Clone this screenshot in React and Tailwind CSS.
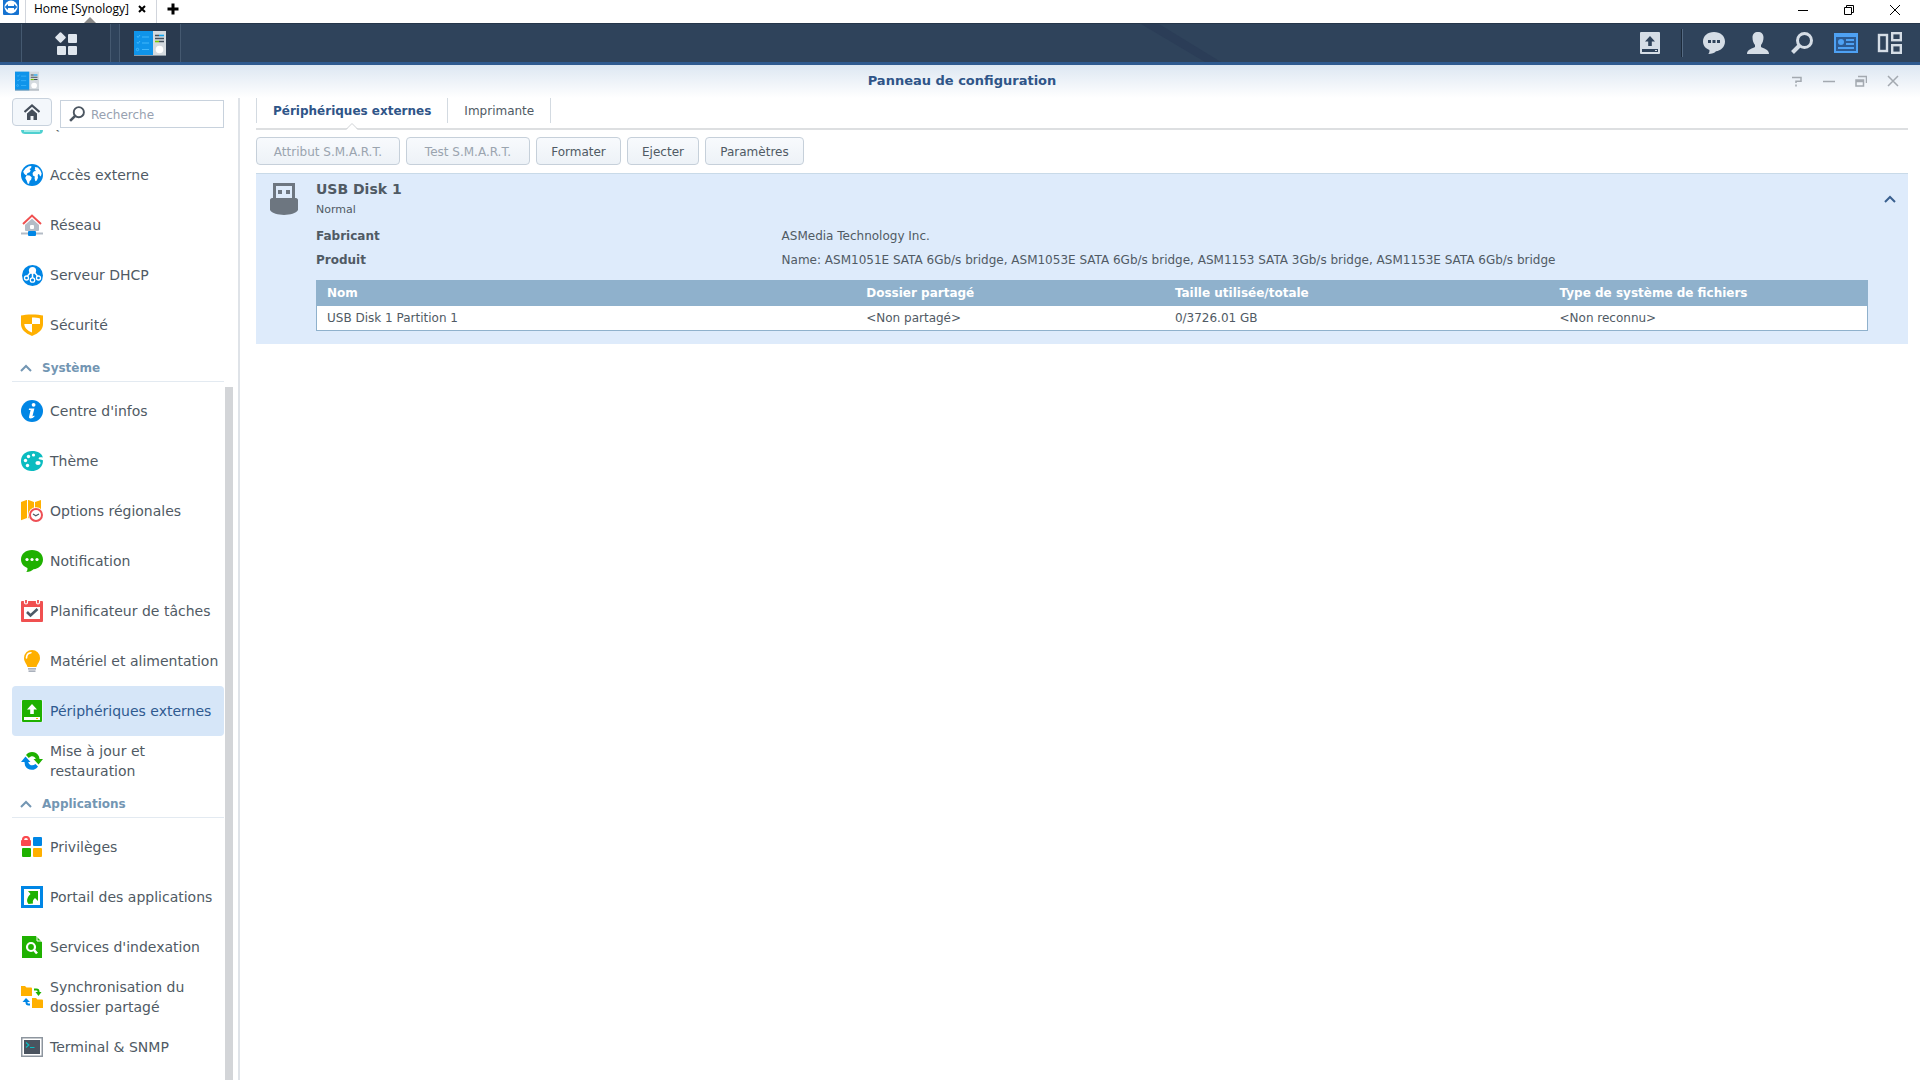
import React from 'react';

/* ---------- Sidebar icons, 22x22 ---------- */

const Svg = ({ children, className = 'w-[22px] h-[22px]', box = '0 0 22 22' }) => (
  <svg className={`shrink-0 ${className}`} viewBox={box} fill="none" aria-hidden="true">
    {children}
  </svg>
);

const QuickConnectIcon = () => (
  <Svg>
    <path d="M0 0h22v16c0 3-2 4-4 4H4c-2 0-4-1-4-4z" fill="#4fd0d0" />
    <rect x="3" y="16" width="16" height="2" fill="#a5ebe8" />
  </Svg>
);

const GlobeIcon = () => (
  <Svg>
    <circle cx="11" cy="11" r="11" fill="#0086e5" />
    <path d="M2.2 7.6 4.4 4.4 7.800 2.300l2.600-.3-.3 2-1.600 1 1.200 1.600-1 1.700-2.400.9-.3 1.500-1.500.2L3 9.600zM5.600 11.200l3 .4 2.100 1.700-.6 2.500-1.400 1.300-.6 2.500-1.200.3-1.300-3.400-1.400-2.600zM13.800 3l3 .4 2.600 3 1.200 3-.5 2.200-1 .8-.7-1.800-1.300-.6-.4 1.800.3 2-1.200 2.600-1.400.8-.8-2.600.2-2.200-1.900-.9-.3-2.500 1.500-1.800 1.900-.3-1.300-1.300.5-1.600z" fill="#fff" />
  </Svg>
);

const NetworkIcon = () => (
  <Svg>
    <path d="M4 9.500 11 4l7 5.500V16a1 1 0 0 1-1 1H5a1 1 0 0 1-1-1z" fill="#b4bcc6" />
    <rect x="9" y="11" width="4" height="4" rx="1" fill="#fff" />
    <path d="M2 10 11 2l9 8" stroke="#fff" strokeWidth="4" />
    <path d="M2 10 11 1.600 20 10" stroke="#f05050" strokeWidth="2" />
    <path d="M0 19.500h22" stroke="#b4bcc6" strokeWidth="2" />
    <rect x="7" y="17" width="8" height="5" rx="1" fill="#0086e5" />
  </Svg>
);

const DhcpIcon = () => (
  <Svg>
    <circle cx="11.500" cy="11.500" r="10.500" fill="#0086e5" />
    <circle cx="11.500" cy="6.500" r="3.600" fill="#fff" />
    <path d="M11.500 9v5M9.500 8.500 6.500 12M13.500 8.500l3 3.500" stroke="#fff" strokeWidth="1.500" />
    <circle cx="5.500" cy="14" r="2" stroke="#fff" strokeWidth="1.300" />
    <circle cx="17.500" cy="14" r="2" stroke="#fff" strokeWidth="1.300" />
    <circle cx="11.500" cy="16" r="2.200" stroke="#fff" strokeWidth="1.300" />
  </Svg>
);

const ShieldIcon = () => (
  <Svg>
    <path d="M0 1.500C4 0 18 0 22 1.500V10c0 5.500-4 9-11 12C4 19 0 15.500 0 10z" fill="#ffb000" />
    <path d="M11 3.500c3 0 6 .3 8 1V10h-8zM11 10v8.500C6.500 16.500 3.500 14 3.300 10z" fill="#fff" />
  </Svg>
);

const InfoIcon = () => (
  <Svg>
    <circle cx="11" cy="11" r="11" fill="#0086e5" />
    <circle cx="12.600" cy="4.800" r="1.900" fill="#fff" />
    <path d="M8 8.600h5.400l-1.900 7.300c-.1.600.4.600 1.700-.3l.4.600c-1.300 1.500-2.500 2.200-4 2.200-1.400 0-1.800-.9-1.500-2l1.500-6.400H7.800z" fill="#fff" />
  </Svg>
);

const PaletteIcon = () => (
  <Svg>
    <path d="M11 1c6 0 10 2.500 10.800 6.500-2.300-.6-4.300-.3-4.200 1.100.1 1.200 2.500 1.200 4.300 1.600.6 6-4.400 10.800-11.400 10.800C4.500 21 0 16.800 0 11S4.500 1 11 1z" fill="#0bbcc0" />
    <ellipse cx="17" cy="13" rx="2.600" ry="2.100" fill="#fff" />
    <circle cx="4.500" cy="10.500" r="1.700" fill="#fff" />
    <circle cx="7.500" cy="6.500" r="1.700" fill="#fff" />
    <circle cx="12.500" cy="5" r="1.600" fill="#fff" />
    <circle cx="6.500" cy="15.500" r="1.700" fill="#fff" />
  </Svg>
);

const RegionIcon = () => (
  <Svg>
    <path d="M0 2 6-.2V18l-6 2.200zM7-.2 13 2v18l-6-2zM14 2l6-2v18l-6 2z" fill="#ffb000" />
    <circle cx="15" cy="15" r="7.800" fill="#fff" />
    <circle cx="15" cy="15" r="6" stroke="#ee4f55" strokeWidth="2" />
    <path d="m12 14 2.800 1.800L18 14" stroke="#4d5a66" strokeWidth="1.200" />
  </Svg>
);

const NotificationIcon = () => (
  <Svg>
    <path d="M11 0c6.500 0 11 4 11 9.500S17.500 19 12.500 19.200c-1.500 1.600-4 2.800-7.300 2.800 1-1 1.500-2.500 1.200-4C2.500 16.500 0 13.500 0 9.500 0 4 4.500 0 11 0z" fill="#1fb100" />
    <circle cx="6" cy="9.500" r="1.600" fill="#fff" />
    <circle cx="11" cy="9.500" r="1.600" fill="#fff" />
    <circle cx="16" cy="9.500" r="1.600" fill="#fff" />
  </Svg>
);

const CalendarIcon = () => (
  <Svg>
    <rect x="0" y="1" width="22" height="21" rx="1" fill="#f05050" />
    <rect x="3" y="7" width="16" height="12" fill="#fff" />
    <path d="M3.500 0v2.500a1 1 0 0 0 3 0V0M15.500 0v2.500a1 1 0 0 0 3 0V0" stroke="#fff" strokeWidth="1.200" fill="#f05050" />
    <path d="m6 12 3.500 3.500L16.500 9" stroke="#4d5a66" strokeWidth="2.600" />
  </Svg>
);

const BulbIcon = () => (
  <Svg>
    <path d="M11 0a8 8 0 0 1 8 8c0 4-3 6-3.500 9h-9C6 14 3 12 3 8a8 8 0 0 1 8-8z" fill="#ffb000" />
    <path d="M5.500 8c0-3 2-5 4.500-5.300" stroke="#fff" strokeWidth="1.600" strokeLinecap="round" />
    <path d="M7 18.800h8M7.500 21.200h7" stroke="#8f98a6" strokeWidth="1.300" />
  </Svg>
);

const ExternalDeviceIcon = () => (
  <Svg>
    <rect x="0.500" y="-.5" width="21" height="23" rx="1" fill="#fff" />
    <rect x="1" y="0" width="20" height="22" rx="1" fill="#1fb100" />
    <path d="m11 4 5 5.500h-3.200V14H9.200V9.500H6z" fill="#fff" />
    <rect x="3" y="17" width="16" height="3" fill="#fff" />
    <rect x="15" y="18" width="2" height="1" fill="#ffb000" />
  </Svg>
);

const UpdateIcon = () => (
  <Svg>
    <path d="M5 5C8 .8 15.500 1 18 6.500L18.500 9H22l-4.500 5.500L12.500 9h2.300c-1.300-3.200-4.600-3.600-7-1z" fill="#1fb100" />
    <path d="M17 16.500C14 21.200 6.500 21 4 15.500L3.500 12H0l4.500-5.500L9.500 12H7.200c1 3.600 4.600 4.400 7.300 2z" fill="#0086e5" />
  </Svg>
);

const PrivilegesIcon = () => (
  <Svg>
    <path d="M2 6V4a3 3 0 0 1 6 0v2" stroke="#fb4a4f" strokeWidth="2.200" />
    <rect x="0" y="4" width="10" height="6" rx="1" fill="#fb4a4f" />
    <rect x="12" y="1" width="9" height="9" rx="1" fill="#0086e5" />
    <rect x="1" y="12" width="9" height="9" rx="1" fill="#1fb100" />
    <rect x="12" y="12" width="9" height="9" rx="1" fill="#ffb000" />
  </Svg>
);

const PortalIcon = () => (
  <Svg>
    <rect x="1.500" y="1.500" width="19" height="19" fill="#fff" stroke="#0086e5" strokeWidth="3" />
    <path d="M7 5h10v10l-3-3c-2 1.500-2.500 3-2 5.500L7.500 18C5 15 6 11.500 9.500 8z" fill="#1fb100" />
  </Svg>
);

const IndexIcon = () => (
  <Svg>
    <path d="M1 0h14l6 6v16H1z" fill="#1fb100" />
    <path d="M16 0v5h5" stroke="#fff" strokeWidth="1" />
    <circle cx="10" cy="11" r="4" stroke="#fff" strokeWidth="2.200" />
    <path d="m13 14 3 3.500" stroke="#fff" strokeWidth="2.600" />
  </Svg>
);

const FolderSyncIcon = () => (
  <Svg>
    <path d="M0 0h4l1.500 1.500H10a1 1 0 0 1 1 1V10H0zM11 12h4l1.500 1.500H21a1 1 0 0 1 1 1V22H11z" fill="#ffb000" />
    <path d="M13 3.500h2.500q2 0 2 2V8" stroke="#1fb100" strokeWidth="2" />
    <path d="M14.500 6h6l-3 4z" fill="#1fb100" />
    <path d="M9 18.500H7.500q-2 0-2-2V14" stroke="#0086e5" strokeWidth="2" />
    <path d="M1.500 16h7.500l-4-4z" fill="#0086e5" />
  </Svg>
);

const TerminalIcon = () => (
  <Svg>
    <rect x="0.750" y="1.750" width="20.500" height="18.500" fill="#fff" stroke="#8d959e" strokeWidth="1.500" />
    <rect x="3" y="4" width="16" height="14" fill="#4a535f" />
    <path d="m5 6.500 2.800 2.500L5 11.500M9 11.500h4.500" stroke="#0bbcc0" strokeWidth="1.200" />
  </Svg>
);

/* ---------- Shell icons ---------- */

const ControlPanelIcon = ({ className }) => (
  <Svg className={className} box="0 0 32 25">
    <rect width="32" height="25" fill="#d4dadf" />
    <rect width="19" height="25" fill="#0f94ea" />
    <path d="m3 5 1 1.500L6 4M8 6h7M3 11l1 1.500L6 10M8 12h7M8 18.500h7" stroke="#4fc0ff" strokeWidth="0.800" />
    <circle cx="3.500" cy="18.500" r="1.200" stroke="#4fc0ff" strokeWidth="0.800" />
    <path d="M21 4.500h4M21 7.500h9M25 10.500h5" stroke="#434f5c" strokeWidth="1.600" />
    <path d="M25 4.500h5" stroke="#12a5ee" strokeWidth="1.600" />
    <path d="M21 10.500h4" stroke="#7ac800" strokeWidth="1.600" />
    <circle cx="25.500" cy="18.500" r="3.800" fill="#fff" />
    <path d="M0 24.500h32" stroke="#8b97a2" strokeWidth="1" />
  </Svg>
);

const Chevron = ({ className }) => (
  <Svg className={className} box="0 0 12 8">
    <path d="m1 7 5-5 5 5" stroke="currentColor" strokeWidth="2" />
  </Svg>
);

const Magnifier = ({ className }) => (
  <Svg className={className}>
    <circle cx="13.500" cy="8.500" r="7" stroke="currentColor" strokeWidth="2.600" />
    <path d="m8.500 13.500-7 7" stroke="currentColor" strokeWidth="3.600" />
  </Svg>
);

const UsbIcon = () => (
  <Svg className="w-7 h-8" box="0 0 28 32">
    <path d="M4.500 1.500h19V17h-19z" fill="#deebfb" stroke="#6d7680" strokeWidth="3" />
    <rect x="8" y="7" width="4" height="4" fill="#6d7680" />
    <rect x="16" y="7" width="4" height="4" fill="#6d7680" />
    <path d="M0 17c0-1 1-2 2-2h24c1 0 2 1 2 2v10c-4 6.500-24 6.500-28 0z" fill="#6d7680" />
  </Svg>
);

const SECTIONS = [
  {
    title: null,
    items: [
      { label: 'QuickConnect', Icon: QuickConnectIcon },
      { label: 'Accès externe', Icon: GlobeIcon },
      { label: 'Réseau', Icon: NetworkIcon },
      { label: 'Serveur DHCP', Icon: DhcpIcon },
      { label: 'Sécurité', Icon: ShieldIcon }
    ]
  },
  {
    title: 'Système',
    items: [
      { label: "Centre d'infos", Icon: InfoIcon },
      { label: 'Thème', Icon: PaletteIcon },
      { label: 'Options régionales', Icon: RegionIcon },
      { label: 'Notification', Icon: NotificationIcon },
      { label: 'Planificateur de tâches', Icon: CalendarIcon },
      { label: 'Matériel et alimentation', Icon: BulbIcon },
      { label: 'Périphériques externes', Icon: ExternalDeviceIcon, active: true },
      { label: 'Mise à jour et restauration', Icon: UpdateIcon }
    ]
  },
  {
    title: 'Applications',
    items: [
      { label: 'Privilèges', Icon: PrivilegesIcon },
      { label: 'Portail des applications', Icon: PortalIcon },
      { label: "Services d'indexation", Icon: IndexIcon },
      { label: 'Synchronisation du dossier partagé', Icon: FolderSyncIcon },
      { label: 'Terminal & SNMP', Icon: TerminalIcon }
    ]
  }
];

const ACTIONS = [
  { label: 'Attribut S.M.A.R.T.', width: 'min-w-[144px]', disabled: true },
  { label: 'Test S.M.A.R.T.', width: 'min-w-[124px]', disabled: true },
  { label: 'Formater', width: 'min-w-[85px]' },
  { label: 'Ejecter', width: 'min-w-[72px]' },
  { label: 'Paramètres', width: 'min-w-[99px]' }
];

const TRAY = [
  {
    label: 'Notifications',
    art: (
      <>
        <path d="M11 0c6.500 0 11 4 11 9.500S17.500 19 13 19.200C11.500 21 9 22 5.200 22c1-1 1.500-2.500 1.200-4C2.500 16.500 0 13.500 0 9.500 0 4 4.500 0 11 0z" fill="#d5dde6" />
        <path d="M5 8h3v3H5zM9.500 8h3v3h-3zM14 8h3v3h-3z" fill="#2f435b" />
      </>
    )
  },
  {
    label: 'Utilisateur',
    art: <path d="M11 0c3.500 0 5.500 2 5.500 5.500 0 3-1 6-2.500 7.500v2c2 1.500 8 2 8 7H0c0-5 6-5.500 8-7v-2c-1.500-1.500-2.500-4.500-2.500-7.500C5.500 2 7.500 0 11 0z" fill="#d5dde6" />
  },
  {
    label: 'Rechercher',
    art: (
      <>
        <circle cx="13.500" cy="8.500" r="7" stroke="#d5dde6" strokeWidth="3" />
        <path d="m8.500 13.500-7 7" stroke="#d5dde6" strokeWidth="4" />
      </>
    )
  },
  {
    label: 'Widgets',
    art: (
      <>
        <rect x="-1" y="1" width="24" height="20" fill="#4ea1f3" />
        <rect x="1" y="5" width="20" height="14" fill="#2c5a92" />
        <circle cx="6" cy="10" r="3" fill="#4ea1f3" />
        <path d="M11 8h8M11 12h8M3 16h16" stroke="#4ea1f3" strokeWidth="1.800" />
      </>
    )
  },
  {
    label: 'Vue d’ensemble',
    art: (
      <>
        <rect x="0" y="3" width="8" height="16" stroke="#d5dde6" strokeWidth="2.400" />
        <rect x="13.200" y="1.200" width="8.600" height="7" stroke="#d5dde6" strokeWidth="2.400" />
        <rect x="13.200" y="13.200" width="8.600" height="7.600" stroke="#d5dde6" strokeWidth="2.400" />
      </>
    )
  }
];

const WINDOW_BUTTONS = [
  { label: 'Aide', art: <path d="M1 2.500h9v3.800H5V8M5 9.500v2" /> },
  { label: 'Réduire', art: <path d="M0 6.500h12" /> },
  { label: 'Restaurer', art: <path d="M3 1.500h8.500V8M1 5h7.500v6H1zM1 6.500h7" /> },
  { label: 'Fermer', art: <path d="m1 1 10 10M11 1 1 11" /> }
];

const OS_BUTTONS = [
  { label: 'Réduire la fenêtre', art: <path d="M1 6.500h10" /> },
  { label: 'Restaurer la fenêtre', art: <path d="M1.500 3.500h7v7h-7zM3.500 3V1.500h7v7H9" /> },
  { label: 'Fermer la fenêtre', art: <path d="m1 1 10 10M11 1 1 11" /> }
];

const TabStrip = () => (
  <div className="relative flex h-[23px] shrink-0 bg-white font-['Open_Sans',sans-serif] text-xs text-black">
    <div className="w-[25px] pl-[3px]">
      <Svg className="w-4 h-4" box="0 0 16 16">
        <rect y="-2" width="16" height="17" rx="1" fill="#1673d1" />
        <circle cx="8" cy="7" r="6.500" fill="#fff" />
        <path d="m1.800 7 3.200-3v2h6V4l3.200 3-3.200 3V8H5v2z" fill="#1673d1" />
      </Svg>
    </div>
    <div className="flex w-[132px] items-center justify-between border-x border-gray-300 pr-[10px] pl-2 pb-[5px]">
      <span className="whitespace-nowrap">Home [Synology]</span>
      <button type="button" aria-label="Fermer l’onglet">
        <Svg className="w-2 h-2" box="0 0 8 8"><path d="m1 1 6 6M7 1 1 7" stroke="#000" strokeWidth="2" /></Svg>
      </button>
    </div>
    <button type="button" aria-label="Nouvel onglet" className="ml-[10px] pb-[5px]">
      <Svg className="w-3 h-3" box="0 0 12 12"><path d="M6 0.500v11M0.500 6h11" stroke="#000" strokeWidth="3" /></Svg>
    </button>
    <div className="ml-auto flex pr-[2px] pb-1">
      {OS_BUTTONS.map(({ label, art }) => (
        <button key={label} type="button" aria-label={label} className="flex w-[46px] items-center justify-center">
          <Svg className="w-3 h-3" box="0 0 12 12"><g stroke="#000" strokeWidth="1">{art}</g></Svg>
        </button>
      ))}
    </div>
    {/* session marker, overlaps the bottom of the tab */}
    <Svg className="absolute bottom-0 left-[84px] w-3 h-[6px]" box="0 0 12 6"><path d="M0 6 6 0l6 6z" fill="#8a8a8a" /></Svg>
  </div>
);

const Taskbar = () => (
  <div className="relative flex h-[42px] shrink-0 border-t border-t-[#25364a] border-b-3 border-b-[#2f5a8f] bg-[#2f435b]">
    <svg className="absolute inset-y-0 left-[59%] h-full w-[90px]" viewBox="0 0 90 38" preserveAspectRatio="none" aria-hidden="true">
      <path d="M8 0h18l62 38H72z" fill="#2b3d57" />
    </svg>
    <div className="w-[22px] border-r border-[#455970] bg-[#2b3c51]" />
    <button type="button" aria-label="Menu principal" className="flex w-[88px] items-center justify-center bg-[#2a3a4f]">
      <Svg className="w-[22px] h-[23px]" box="0 0 22 23">
        <rect x="1.500" y="1.500" width="8" height="8" rx="1" transform="rotate(45 5.500 5.500)" fill="#dfe6ee" />
        <rect x="13" y="2" width="9" height="9" rx="1" fill="#dfe6ee" />
        <rect x="2" y="14" width="9" height="9" rx="1" fill="#dfe6ee" />
        <rect x="13" y="14" width="9" height="9" rx="1" fill="#dfe6ee" />
      </Svg>
    </button>
    <div className="w-[9px] border-l border-[#455970]" />
    <button type="button" aria-label="Panneau de configuration" className="flex w-[62px] items-center justify-center border-x border-[#455970] bg-[#2a3a4f]">
      <ControlPanelIcon className="w-8 h-[25px]" />
    </button>
    <div className="ml-auto flex items-center pr-2">
      <button type="button" aria-label="Périphérique USB" className="flex w-11 justify-center">
        <Svg>
          <rect x="1" y="0" width="20" height="22" rx="1" fill="#d5dde6" />
          <path d="m11 4 5 5.500h-3.200V14H9.200V9.500H6z" fill="#2f435b" />
          <rect x="3" y="17" width="16" height="3" fill="#2f435b" />
          <rect x="16" y="18" width="2" height="1" fill="#d5dde6" />
        </Svg>
      </button>
      <div className="mr-[9px] ml-[9px] h-7 w-[2px] border-l border-[#1c2a3a] bg-[#556a82]" />
      {TRAY.map(({ label, art }) => (
        <button key={label} type="button" aria-label={label} className="flex w-11 justify-center">
          <Svg className="w-[22px] h-[22px] overflow-visible">{art}</Svg>
        </button>
      ))}
    </div>
  </div>
);

const NavItem = ({ label, Icon, active }) => (
  <li>
    <a
      href="#"
      aria-current={active ? 'page' : undefined}
      className={`flex h-[50px] items-center gap-[7px] rounded-sm pl-[9px] text-sm leading-5 ${
        active ? 'bg-[#d6e6f8] text-[#2f5a90]' : 'text-[#505a64]'
      }`}
    >
      <Icon />
      <span className="w-[176px] shrink-0">{label}</span>
    </a>
  </li>
);

const Sidebar = () => (
  <aside className="flex w-[240px] shrink-0 flex-col border-r-2 border-[#dfe3e8] pl-3">
    <div className="flex h-8 shrink-0 gap-2">
      <button type="button" aria-label="Accueil" className="flex h-7 w-10 items-center justify-center rounded-sm border border-[#c8d2dd] bg-[#f3f7fb]">
        <Svg className="w-4 h-4" box="0 0 16 16">
          <path d="M3 9.500 8 5l5 4.500V16H9.500v-4h-3v4H3z" fill="#454f5b" />
          <path d="M0 8.800 8 1.800l8 7" stroke="#f3f7fb" strokeWidth="4.500" />
          <path d="M0.500 8 8 1.500 15.500 8" stroke="#454f5b" strokeWidth="2.200" />
        </Svg>
      </button>
      <label className="mt-[2px] flex h-7 w-[164px] items-center gap-[6px] border border-[#c8d2dd] bg-white pl-2">
        <Magnifier className="w-4 h-4 text-[#4b5560]" />
        <input
          type="text"
          placeholder="Recherche"
          aria-label="Recherche"
          className="w-full min-w-0 bg-transparent pt-px text-xs text-[#505a64] outline-none placeholder:text-[#97a1b0]"
        />
      </label>
    </div>
    <div className="flex min-h-0 flex-1 gap-px overflow-hidden">
      {/* list is scrolled, its first entry sits mostly above the edge */}
      <nav className="-mt-[30px] w-[212px] shrink-0">
        {SECTIONS.map(({ title, items }) => (
          <section key={title || 'connectivity'}>
            {title && (
              <h2 className="mb-1 border-b border-[#e3eaf1] text-xs font-bold text-[#7396b3]">
                <button type="button" className="flex h-[31px] w-full items-center gap-[10px] pt-1 pl-2">
                  <Chevron className="w-3 h-2" />
                  {title}
                </button>
              </h2>
            )}
            <ul>
              {items.map((item) => (
                <NavItem key={item.label} {...item} />
              ))}
            </ul>
          </section>
        ))}
      </nav>
      <div className="mt-[257px] w-2 bg-[#d3d5d8]" />
    </div>
  </aside>
);

const DiskPanel = () => (
  <section className="mt-2 border-t border-[#c9dae8] bg-[#deebfb] pt-[5px] pr-3 pb-[13px] pl-[14px]">
    <div className="flex items-start gap-[18px]">
      <div className="pt-1">
        <UsbIcon />
      </div>
      <div className="flex-1">
        <h2 className="text-sm leading-5 font-bold">USB Disk 1</h2>
        <p className="pt-px text-[11px] leading-5">Normal</p>
      </div>
      <button type="button" aria-label="Replier" className="pt-4 text-[#3a608f]">
        <Chevron className="w-3 h-2" />
      </button>
    </div>
    <div className="mr-7 ml-[46px]">
      <dl className="mt-1 mb-2 grid grid-cols-[30%_1fr] text-xs leading-6">
        <dt className="font-bold">Fabricant</dt>
        <dd>ASMedia Technology Inc.</dd>
        <dt className="font-bold">Produit</dt>
        <dd>Name: ASM1051E SATA 6Gb/s bridge, ASM1053E SATA 6Gb/s bridge, ASM1153 SATA 3Gb/s bridge, ASM1153E SATA 6Gb/s bridge</dd>
      </dl>
      <table className="w-full table-fixed border-collapse border border-[#8fb1cc] bg-white text-left text-xs">
        <colgroup>
          <col className="w-[34.8%]" />
          <col className="w-[19.9%]" />
          <col className="w-[24.8%]" />
          <col />
        </colgroup>
        <thead className="bg-[#8fb1cc] text-white">
          <tr className="h-[25px]">
            <th className="px-[10px]">Nom</th>
            <th className="px-[10px]">Dossier partagé</th>
            <th className="px-[10px]">Taille utilisée/totale</th>
            <th className="px-[10px]">Type de système de fichiers</th>
          </tr>
        </thead>
        <tbody>
          <tr className="h-[25px]">
            <td className="px-[10px]">USB Disk 1 Partition 1</td>
            <td className="px-[10px]">&lt;Non partagé&gt;</td>
            <td className="px-[10px]">0/3726.01 GB</td>
            <td className="px-[10px]">&lt;Non reconnu&gt;</td>
          </tr>
        </tbody>
      </table>
    </div>
  </section>
);

const Content = () => (
  <main className="min-w-0 flex-1 pr-3 pl-4">
    <div role="tablist" className="flex h-8 items-start border-b-2 border-[#dddfe1] text-xs">
      <button type="button" role="tab" aria-selected="true" className="relative h-[25px] border-x border-[#d3dae1] px-4 pt-px font-bold text-[#2f5588]">
        Périphériques externes
        <svg className="absolute top-[25px] left-1/2 h-[7px] w-3 -translate-x-1/2" viewBox="0 0 12 7" aria-hidden="true">
          <path d="M0 7 6 1l6 6z" fill="#fff" />
          <path d="M0 6.500 6 .5l6 6" fill="none" stroke="#cfd2d5" />
        </svg>
      </button>
      <button type="button" role="tab" aria-selected="false" className="h-[25px] border-r border-[#d3dae1] px-4 pt-px">
        Imprimante
      </button>
    </div>
    <div className="mt-[7px] flex gap-[6px]">
      {ACTIONS.map(({ label, width, disabled }) => (
        <button
          key={label}
          type="button"
          disabled={disabled}
          className={`h-7 rounded-sm border border-[#c6d0da] bg-linear-to-b from-[#f8fafd] to-[#edf2f7] px-3 pt-px text-xs disabled:text-[#9aa4af] ${width}`}
        >
          {label}
        </button>
      ))}
    </div>
    <DiskPanel />
  </main>
);

export default function App() {
  return (
    <div className="flex h-screen flex-col overflow-hidden bg-white font-['DejaVu_Sans',Verdana,sans-serif] text-[#505a64]">
      <TabStrip />
      <Taskbar />
      <header className="grid h-[33px] shrink-0 grid-cols-[1fr_auto_1fr] items-center bg-linear-to-b from-[#dde7f2] to-white pr-[11px] pb-[2px] pl-[15px]">
        <ControlPanelIcon className="w-6 h-5" />
        <h1 className="text-[13px] font-bold text-[#2f5588]">Panneau de configuration</h1>
        <div className="flex justify-end">
          {WINDOW_BUTTONS.map(({ label, art }) => (
            <button key={label} type="button" aria-label={label} className="flex w-8 justify-center">
              <Svg className="w-3 h-3" box="0 0 12 12"><g stroke="#a3a9b0" strokeWidth="1.500">{art}</g></Svg>
            </button>
          ))}
        </div>
      </header>
      <div className="flex min-h-0 flex-1">
        <Sidebar />
        <Content />
      </div>
    </div>
  );
}
